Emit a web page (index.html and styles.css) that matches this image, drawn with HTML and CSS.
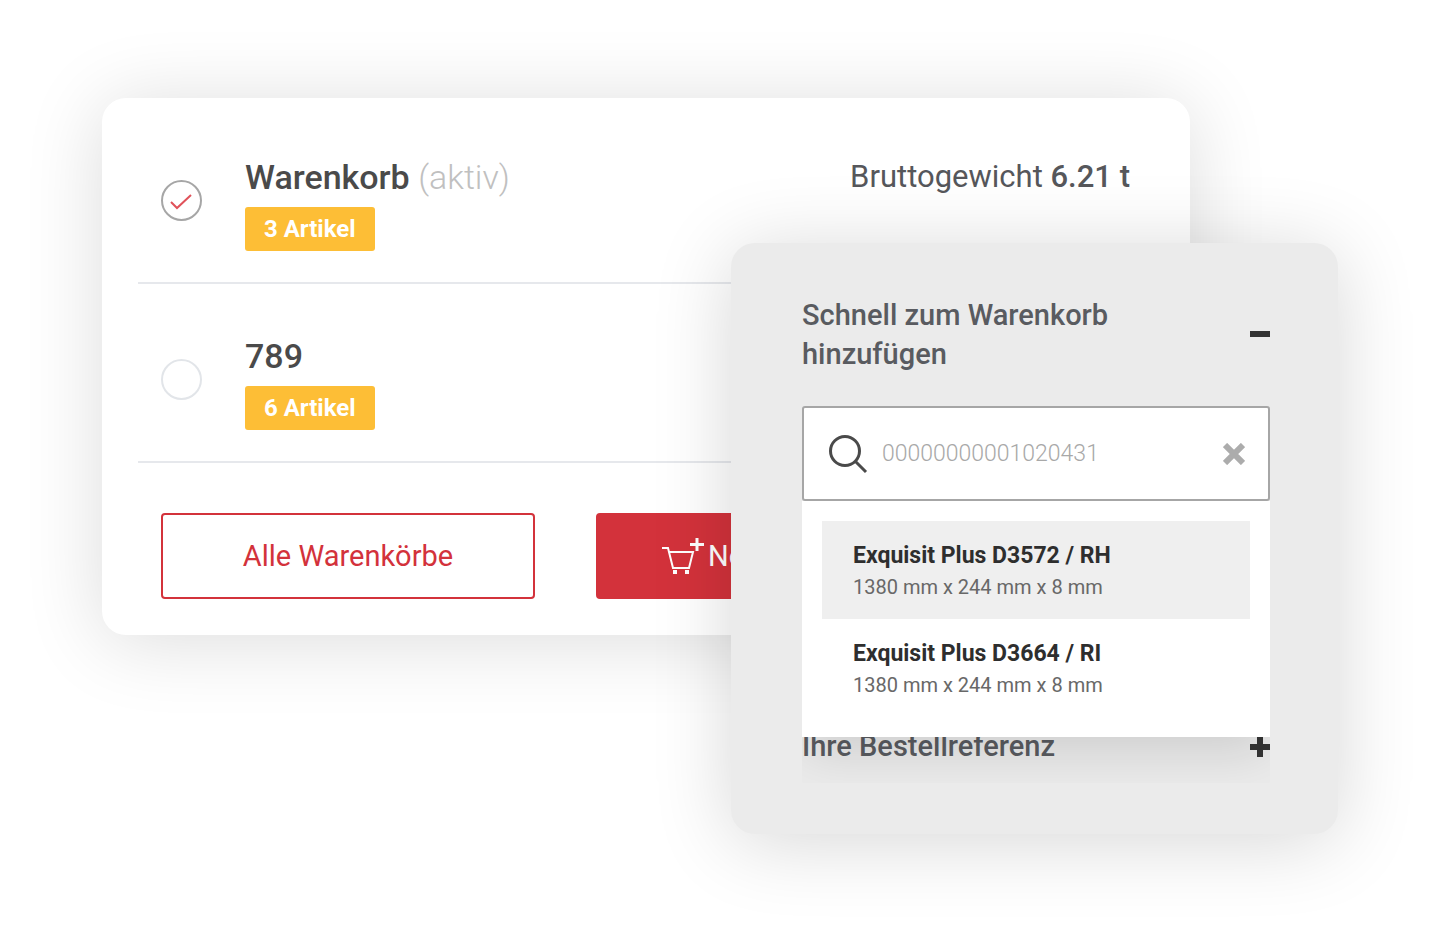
FILE: index.html
```html
<!DOCTYPE html>
<html lang="de">
<head>
<meta charset="utf-8">
<meta name="viewport" content="width=device-width, initial-scale=1">
<title>Warenkorb</title>
<link rel="stylesheet" href="styles.css">
</head>
<body>
<main class="stage">
  <section class="card" aria-label="Warenkörbe">
    <ul class="carts">
      <li class="cart">
        <span class="radio">
          <input class="radio-input" type="radio" name="cart" id="cart-1" checked>
          <svg class="radio-check" viewBox="0 0 41 41" aria-hidden="true"><path d="M10 22l6 6 14-13"/></svg>
        </span>
        <div class="cart-info">
          <label class="cart-name" for="cart-1">Warenkorb <span class="cart-state">(aktiv)</span></label>
          <span class="badge">3 Artikel</span>
        </div>
        <p class="weight">Bruttogewicht <strong class="weight-value">6.21 t</strong></p>
      </li>
      <li class="cart">
        <span class="radio">
          <input class="radio-input" type="radio" name="cart" id="cart-2">
        </span>
        <div class="cart-info">
          <label class="cart-name" for="cart-2">789</label>
          <span class="badge">6 Artikel</span>
        </div>
      </li>
    </ul>
    <div class="actions">
      <button class="button button-outline" type="button">Alle Warenkörbe</button>
      <button class="button button-solid" type="button">
        <svg class="cart-icon" viewBox="0 0 42 38" aria-hidden="true"><path d="M0 11h6l5 20h16l4-16H7"/><path d="M13 33v4M25 33v4" stroke-width="4"/><path d="M35 1v13M28 7.500h14" stroke-width="3"/></svg>
        Neu
      </button>
    </div>
  </section>

  <aside class="panel">
    <button class="accordion" type="button" aria-expanded="true">
      <span class="accordion-title">Schnell zum Warenkorb hinzufügen</span>
      <svg class="toggle" viewBox="0 0 20 20" aria-hidden="true"><path d="M0 9h20"/></svg>
    </button>
    <div class="search">
      <div class="search-box">
        <svg class="search-icon" viewBox="0 0 40 40" aria-hidden="true"><circle cx="17" cy="17" r="14.500"/><path d="M27 27l11 11"/></svg>
        <input class="search-input" type="text" aria-label="Artikel suchen" value="00000000001020431">
        <button class="clear" type="button" aria-label="Eingabe löschen">
          <svg class="clear-icon" viewBox="0 0 22 22" aria-hidden="true"><path d="M2 2l18 18M20 2L2 20"/></svg>
        </button>
      </div>
      <ul class="results">
        <li><button class="result result-active" type="button"><strong class="result-name">Exquisit Plus D3572 / RH</strong><span class="result-size">1380 mm x 244 mm x 8 mm</span></button></li>
        <li><button class="result" type="button"><strong class="result-name">Exquisit Plus D3664 / RI</strong><span class="result-size">1380 mm x 244 mm x 8 mm</span></button></li>
      </ul>
    </div>
    <button class="accordion accordion-reference" type="button" aria-expanded="false">
      <span class="accordion-title">Ihre Bestellreferenz</span>
      <svg class="toggle" viewBox="0 0 20 20" aria-hidden="true"><path d="M0 10h20M10 0v20"/></svg>
    </button>
  </aside>
</main>
</body>
</html>
```
FILE: styles.css
```css
* {
  box-sizing: border-box;
}

body {
  margin: 0;
  background: #fff;
  color: #4a4a4a;
  font-family: Roboto, "Liberation Sans", sans-serif;
}

button,
input {
  font: inherit;
  color: inherit;
}

button {
  padding: 0;
  border: 0;
  background: none;
  cursor: pointer;
}

ul {
  margin: 0;
  padding: 0;
  list-style: none;
}

svg {
  fill: none;
  stroke: currentColor;
}

/* The card and the panel share the middle column, so the panel overlaps the card. */
.stage {
  display: grid;
  grid-template-columns: minmax(0, 1fr) 459px 148px;
  align-items: start;
  min-height: 100vh;
  padding: 98px 102px;
}

.card {
  grid-area: 1 / 1 / 2 / 3;
  padding: 7px 36px 36px;
  border-radius: 24px;
  background: #fff;
  box-shadow: 0 6px 80px rgba(0, 0, 0, 0.14);
}

.cart {
  display: flex;
  align-items: flex-start;
  gap: 43px;
  padding: 52px 24px 31px 23px;
  border-bottom: 2px solid #e6e8ec;
}

.radio {
  position: relative;
  flex: none;
  width: 41px;
  height: 41px;
  margin-top: 23px;
}

.radio-input {
  appearance: none;
  display: block;
  width: 100%;
  height: 100%;
  margin: 0;
  border: 2px solid #e2e5e9;
  border-radius: 50%;
}

.radio-input:checked {
  border-color: #a6a6a6;
}

.radio-check {
  position: absolute;
  inset: 0;
  color: #e0525a;
  stroke-width: 2;
  pointer-events: none;
}

.cart-info {
  display: flex;
  flex: 1;
  flex-direction: column;
  align-items: flex-start;
  gap: 10px;
}

.cart-name {
  font-size: 34px;
  font-weight: 500;
  line-height: 40px;
}

.cart-state {
  color: #c0c0c0;
  font-weight: 300;
}

.badge {
  padding: 0 19px;
  border-radius: 3px;
  background: #fdbe36;
  color: #fff;
  font-size: 24px;
  font-weight: 700;
  line-height: 44px;
}

.weight {
  margin: 0;
  color: #56575b;
  font-size: 31px;
  line-height: 40px;
}

.weight-value {
  font-weight: 500;
}

.actions {
  display: flex;
  gap: 61px;
  padding: 50px 23px 0;
}

.button {
  display: flex;
  flex: 0 1 374px;
  align-items: center;
  justify-content: center;
  gap: 4px;
  height: 86px;
  border: 2px solid #d3323b;
  border-radius: 4px;
  font-size: 29px;
  white-space: nowrap;
}

.button-outline {
  color: #d3323b;
}

.button-solid {
  justify-content: flex-start;
  padding-left: 64px;
  background: #d3323b;
  color: #fff;
}

.cart-icon {
  width: 42px;
  height: 38px;
  stroke-width: 2;
}

.panel {
  grid-area: 1 / 2 / 2 / 4;
  margin-top: 145px;
  padding: 53px 68px 68px 71px;
  border-radius: 24px;
  background: #ebebeb;
  box-shadow: 0 8px 80px rgba(0, 0, 0, 0.16);
}

.accordion {
  display: flex;
  align-items: center;
  justify-content: space-between;
  width: 100%;
  color: #595b60;
  text-align: left;
}

.accordion-title {
  max-width: 340px;
  font-size: 29px;
  font-weight: 500;
  line-height: 39px;
}

.accordion-reference {
  margin-top: 226px;
}

.toggle {
  width: 20px;
  height: 20px;
  color: #333;
  stroke-width: 6;
}

.search {
  position: relative;
  margin-top: 32px;
}

.search-box {
  display: flex;
  align-items: center;
  gap: 14px;
  height: 95px;
  padding: 0 23px 0 24px;
  border: 2px solid #a6a6a6;
  border-radius: 3px;
  background: #fff;
}

.search-icon {
  flex: none;
  width: 40px;
  height: 40px;
  color: #4a4a4a;
  stroke-width: 3;
}

.search-input {
  flex: 1;
  min-width: 0;
  padding: 0;
  border: 0;
  outline: 0;
  background: none;
  color: #a8a8a8;
  font-size: 23px;
  font-weight: 300;
}

.clear {
  color: #acacac;
}

.clear-icon {
  display: block;
  width: 22px;
  height: 22px;
  stroke-width: 6;
}

.results {
  position: absolute;
  top: 100%;
  right: 0;
  left: 0;
  padding: 20px;
  background: #fff;
  box-shadow: 0 16px 48px rgba(0, 0, 0, 0.12);
  clip-path: inset(0 0 -46px 0);
}

.result {
  display: flex;
  flex-direction: column;
  gap: 1px;
  width: 100%;
  padding: 20px 31px 17px;
  text-align: left;
  font-size: 23px;
  line-height: 30px;
}

.result-active {
  background: #efefef;
}

.result-name {
  color: #2e2e2e;
  font-weight: 700;
}

.result-size {
  color: #686868;
  font-size: 20px;
}
```
